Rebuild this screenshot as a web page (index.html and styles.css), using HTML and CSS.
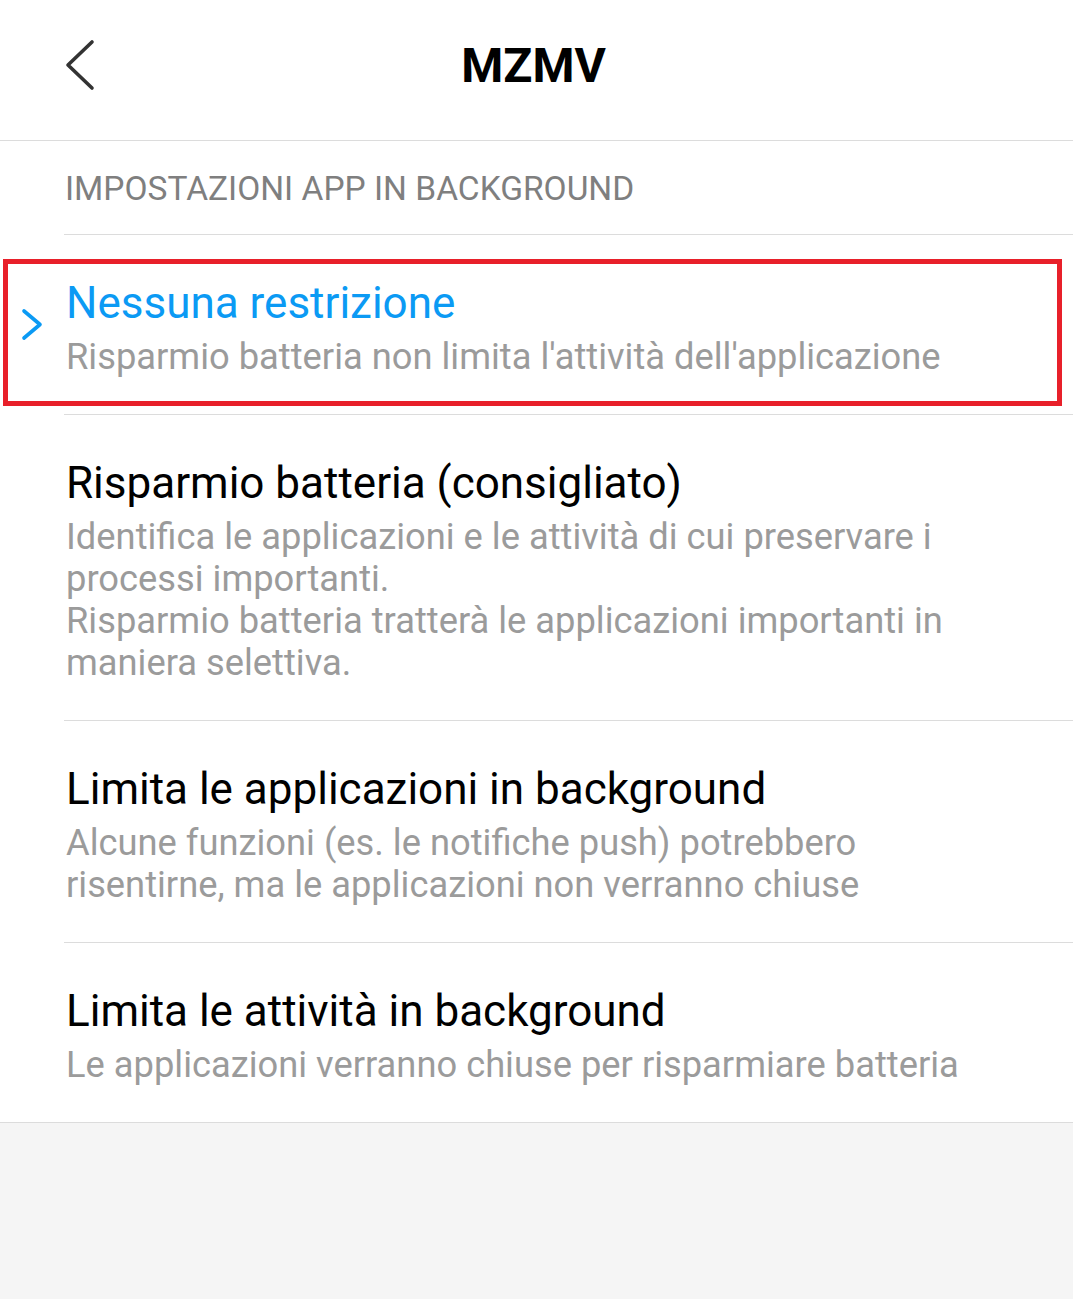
FILE: index.html
```html
<!DOCTYPE html>
<html lang="it">
<head>
    <meta charset="UTF-8">
    <meta name="viewport" content="width=device-width, initial-scale=1.0">
    <title>MZMV</title>
    <link rel="stylesheet" href="styles.css">
</head>
<body>
    <main class="page">
        <header class="top_bar">
            <button class="back_btn" aria-label="Indietro">
                <svg width="32" height="54" viewBox="0 0 32 54">
                    <path d="M28 4 L4 27 L28 50" fill="none" stroke="#333" stroke-width="3.6" stroke-linecap="round" stroke-linejoin="round"/>
                </svg>
            </button>
            <h1 class="top_title">MZMV</h1>
        </header>

        <section class="settings">
            <h2 class="section_label">IMPOSTAZIONI APP IN BACKGROUND</h2>

            <div class="option selected">
                <span class="check_mark">
                    <svg width="24" height="40" viewBox="0 0 24 40">
                        <path d="M4 6 L20 19.5 L4 33" fill="none" stroke="#0b9af4" stroke-width="3.6" stroke-linecap="round" stroke-linejoin="round"/>
                    </svg>
                </span>
                <p class="option_title">Nessuna restrizione</p>
                <p class="option_desc">Risparmio batteria non limita l'attività dell'applicazione</p>
                <span class="highlight_box"></span>
            </div>

            <div class="option">
                <p class="option_title">Risparmio batteria (consigliato)</p>
                <p class="option_desc">Identifica le applicazioni e le attività di cui preservare i<br>processi importanti.<br>Risparmio batteria tratterà le applicazioni importanti in<br>maniera selettiva.</p>
            </div>

            <div class="option">
                <p class="option_title">Limita le applicazioni in background</p>
                <p class="option_desc">Alcune funzioni (es. le notifiche push) potrebbero<br>risentirne, ma le applicazioni non verranno chiuse</p>
            </div>

            <div class="option last">
                <p class="option_title">Limita le attività in background</p>
                <p class="option_desc">Le applicazioni verranno chiuse per risparmiare batteria</p>
            </div>
        </section>
    </main>
</body>
</html>
```

FILE: styles.css
```css
* {
    margin: 0;
    padding: 0;
    box-sizing: border-box;
}
body {
    background-color: #f5f5f5;
    font-family: Roboto, "Noto Sans", sans-serif;
}
.page {
    width: 100%;
    min-height: 100vh;
}
.top_bar {
    position: relative;
    height: 141px;
    background-color: white;
    border-bottom: 1px solid #dcdcdc;
    display: flex;
    justify-content: center;
    align-items: center;
}
.back_btn {
    position: absolute;
    left: 64px;
    top: 38px;
    background: none;
    border: none;
    cursor: pointer;
    line-height: 0;
}
.top_title {
    font-size: 48px;
    font-weight: 700;
    color: black;
    margin-left: -6px;
    margin-top: -10px;
}
.settings {
    background-color: white;
    border-bottom: 1px solid #dcdcdc;
}
.section_label {
    margin-left: 64px;
    height: 94px;
    padding-left: 1px;
    padding-top: 28px;
    font-size: 33.5px;
    font-weight: 400;
    line-height: 40px;
    color: #7f7f7f;
    border-bottom: 1px solid #dcdcdc;
}
.option {
    position: relative;
    margin-left: 64px;
    padding: 40px 30px 36px 2px;
    border-bottom: 1px solid #dcdcdc;
}
.option.last {
    border-bottom: none;
}
.option_title {
    font-size: 44px;
    line-height: 56px;
    color: black;
}
.option_desc {
    margin-top: 5px;
    font-size: 36.3px;
    line-height: 42px;
    color: #9b9b9b;
}
.selected .option_title {
    color: #0b9af4;
}
.check_mark {
    position: absolute;
    left: -44px;
    top: 70px;
    line-height: 0;
}
.highlight_box {
    position: absolute;
    left: -61px;
    right: 11px;
    top: 24px;
    bottom: 8px;
    border: 5px solid #e8202a;
    pointer-events: none;
}
```
